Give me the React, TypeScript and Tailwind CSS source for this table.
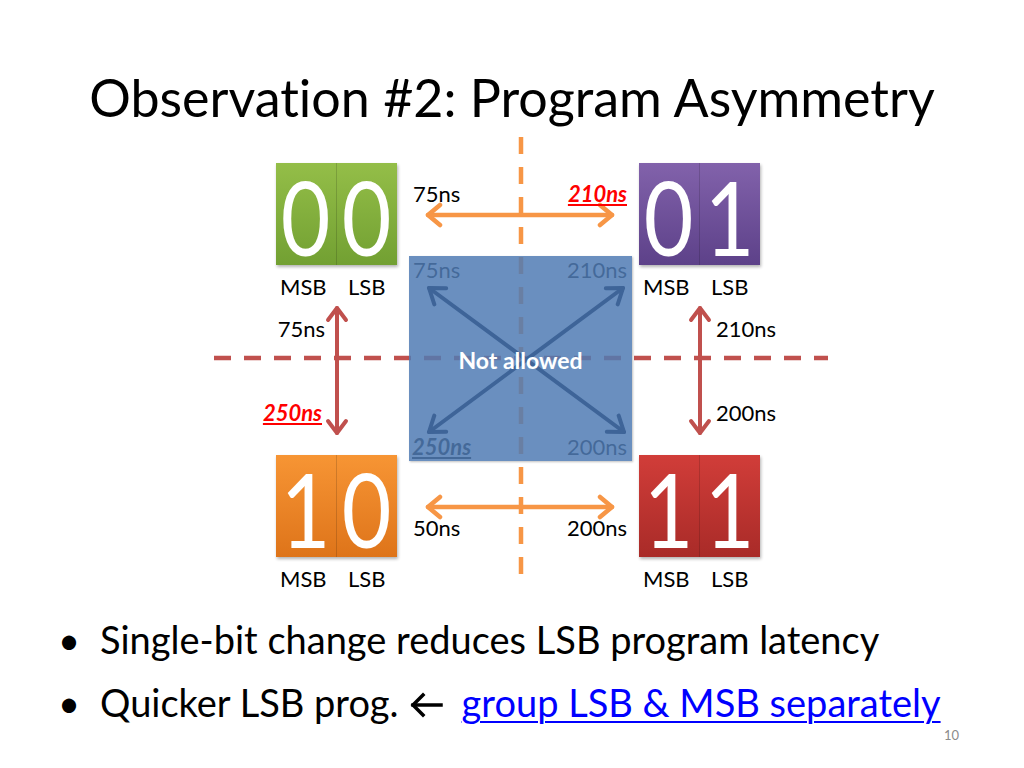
import React from "react";

type Pt = { x1: number; y1: number; x2: number; y2: number };

function heads({ x1, y1, x2, y2 }: Pt, len: number, w: number) {
  const dx = x2 - x1;
  const dy = y2 - y1;
  const L = Math.hypot(dx, dy);
  const ux = dx / L;
  const uy = dy / L;
  const px = -uy;
  const py = ux;
  const h = (tx: number, ty: number, dx2: number, dy2: number) =>
    `M${tx - dx2 * len + px * w} ${ty - dy2 * len + py * w} L${tx} ${ty} L${tx - dx2 * len - px * w} ${ty - dy2 * len - py * w}`;
  return h(x2, y2, ux, uy) + " " + h(x1, y1, -ux, -uy);
}

function Arrow({ p, color, sw, len, w }: { p: Pt; color: string; sw: number; len: number; w: number }) {
  return (
    <g stroke={color} strokeWidth={sw} strokeLinecap="round" strokeLinejoin="round" fill="none">
      <line x1={p.x1} y1={p.y1} x2={p.x2} y2={p.y2} />
      <path d={heads(p, len, w)} />
    </g>
  );
}

function Tile({ a, b, grad }: { a: string; b: string; grad: string }) {
  return (
    <div className="flex flex-col">
      <div className={`flex w-[121px] h-[102px] shadow-[1px_2px_3px_rgba(0,0,0,0.3)] ${grad}`}>
        <div className="w-1/2 flex items-center justify-center pt-[6px] border-r border-black/15 text-white text-[102px] leading-[80px]">
          <span className="inline-block scale-x-[0.84]">{a}</span>
        </div>
        <div className="w-1/2 flex items-center justify-center pt-[6px] text-white text-[102px] leading-[80px]">
          <span className="inline-block scale-x-[0.84]">{b}</span>
        </div>
      </div>
      <div className="flex mt-[10px] text-[22px] leading-[24px] text-black">
        <span className="w-1/2 text-center pr-[6px]">MSB</span>
        <span className="w-1/2 text-center">LSB</span>
      </div>
    </div>
  );
}

export default function App() {
  const red = "#c0504d";
  const orange = "#f79646";
  const blue = "#3e6498";
  const lbl = "text-[22px] leading-[24px]";
  return (
    <div className="relative w-[1024px] h-[768px] bg-white overflow-hidden font-[family-name:Lato,sans-serif] text-black [font-variant-ligatures:none]">
      <h1 className="mt-[65px] h-[65px] text-center text-[52px] leading-[65px] font-normal">
        Observation #2: Program Asymmetry
      </h1>

      {/* diagram */}
      <div className="relative h-[478px] w-full">
        <svg className="absolute left-0 top-0" width="1024" height="478">
          <line x1="521" y1="7" x2="521" y2="445" stroke={orange} strokeWidth="4.5" strokeDasharray="17 13" />
          <line x1="214" y1="228" x2="828" y2="228" stroke={red} strokeWidth="4.5" strokeDasharray="17 13" />
          <Arrow p={{ x1: 428, y1: 85, x2: 612, y2: 85 }} color={orange} sw={4.5} len={12} w={10} />
          <Arrow p={{ x1: 428, y1: 377, x2: 612, y2: 377 }} color={orange} sw={4.5} len={12} w={10} />
          <Arrow p={{ x1: 337, y1: 178, x2: 337, y2: 303 }} color={red} sw={4} len={12} w={9} />
          <Arrow p={{ x1: 700, y1: 178, x2: 700, y2: 303 }} color={red} sw={4} len={12} w={9} />
        </svg>

        <div className="absolute left-[276px] top-[33px]">
          <Tile a="0" b="0" grad="bg-linear-to-b from-[#94be48] to-[#72a032]" />
        </div>
        <div className="absolute left-[639px] top-[33px]">
          <Tile a="0" b="1" grad="bg-linear-to-b from-[#8262ab] to-[#5d4189]" />
        </div>
        <div className="absolute left-[276px] top-[325px]">
          <Tile a="1" b="0" grad="bg-linear-to-b from-[#f79534] to-[#de7419]" />
        </div>
        <div className="absolute left-[639px] top-[325px]">
          <Tile a="1" b="1" grad="bg-linear-to-b from-[#d13d39] to-[#a92b28]" />
        </div>

        {/* labels outside box */}
        <div className={`absolute left-[413px] top-[52px] ${lbl}`}>75ns</div>
        <div className={`absolute left-[527px] top-[52px] w-[100px] text-right ${lbl} font-bold italic underline text-[#ff0000]`}>
          210ns
        </div>
        <div className={`absolute left-[225px] top-[187px] w-[100px] text-right ${lbl}`}>75ns</div>
        <div className={`absolute left-[222px] top-[271px] w-[100px] text-right ${lbl} font-bold italic underline text-[#ff0000]`}>
          250ns
        </div>
        <div className={`absolute left-[716px] top-[187px] ${lbl}`}>210ns</div>
        <div className={`absolute left-[716px] top-[271px] ${lbl}`}>200ns</div>
        <div className={`absolute left-[413px] top-[386px] ${lbl}`}>50ns</div>
        <div className={`absolute left-[527px] top-[386px] w-[100px] text-right ${lbl}`}>200ns</div>

        {/* labels behind the box */}
        <div className={`absolute left-[413px] top-[128px] ${lbl}`}>75ns</div>
        <div className={`absolute left-[527px] top-[128px] w-[100px] text-right ${lbl}`}>210ns</div>
        <div className={`absolute left-[412px] top-[305px] ${lbl} font-bold italic underline`}>250ns</div>
        <div className={`absolute left-[527px] top-[305px] w-[100px] text-right ${lbl}`}>200ns</div>

        {/* Not allowed box */}
        <div className="absolute left-[409px] top-[126px] w-[223px] h-[205px] bg-[rgba(80,123,180,0.85)] shadow-[1px_1px_2px_rgba(0,0,0,0.25)]" />
        <svg className="absolute left-0 top-0" width="1024" height="478">
          <Arrow p={{ x1: 429, y1: 158, x2: 624, y2: 302 }} color={blue} sw={4} len={14} w={10} />
          <Arrow p={{ x1: 623, y1: 158, x2: 429, y2: 302 }} color={blue} sw={4} len={14} w={10} />
        </svg>
        <div className="absolute left-[409px] top-[217px] w-[223px] text-center text-[23px] leading-[26px] font-bold text-white">
          Not allowed
        </div>
      </div>

      {/* bullets */}
      <ul className="pl-[58px] text-[38px] leading-[63px]">
        <li className="flex">
          <span className="w-[42px] shrink-0">•</span>
          <span>Single-bit change reduces LSB program latency</span>
        </li>
        <li className="flex items-center">
          <span className="w-[42px] shrink-0">•</span>
          <span>Quicker LSB prog.</span>
          <svg className="ml-[9px] mr-[18px] mt-[4px]" width="36" height="26" viewBox="0 0 36 26">
            <g stroke="#000" strokeWidth="3.5" fill="none" strokeLinecap="square">
              <path d="M5 13 H33" />
              <path d="M15 3 L5 13 L15 23" />
            </g>
          </svg>
          <span className="text-[#0000ff] underline decoration-2 underline-offset-4">group LSB &amp; MSB separately</span>
        </li>
      </ul>

      <div className="absolute left-[944px] top-[727px] text-[13px] leading-[16px] text-[#8b8b8b]">10</div>
    </div>
  );
}
